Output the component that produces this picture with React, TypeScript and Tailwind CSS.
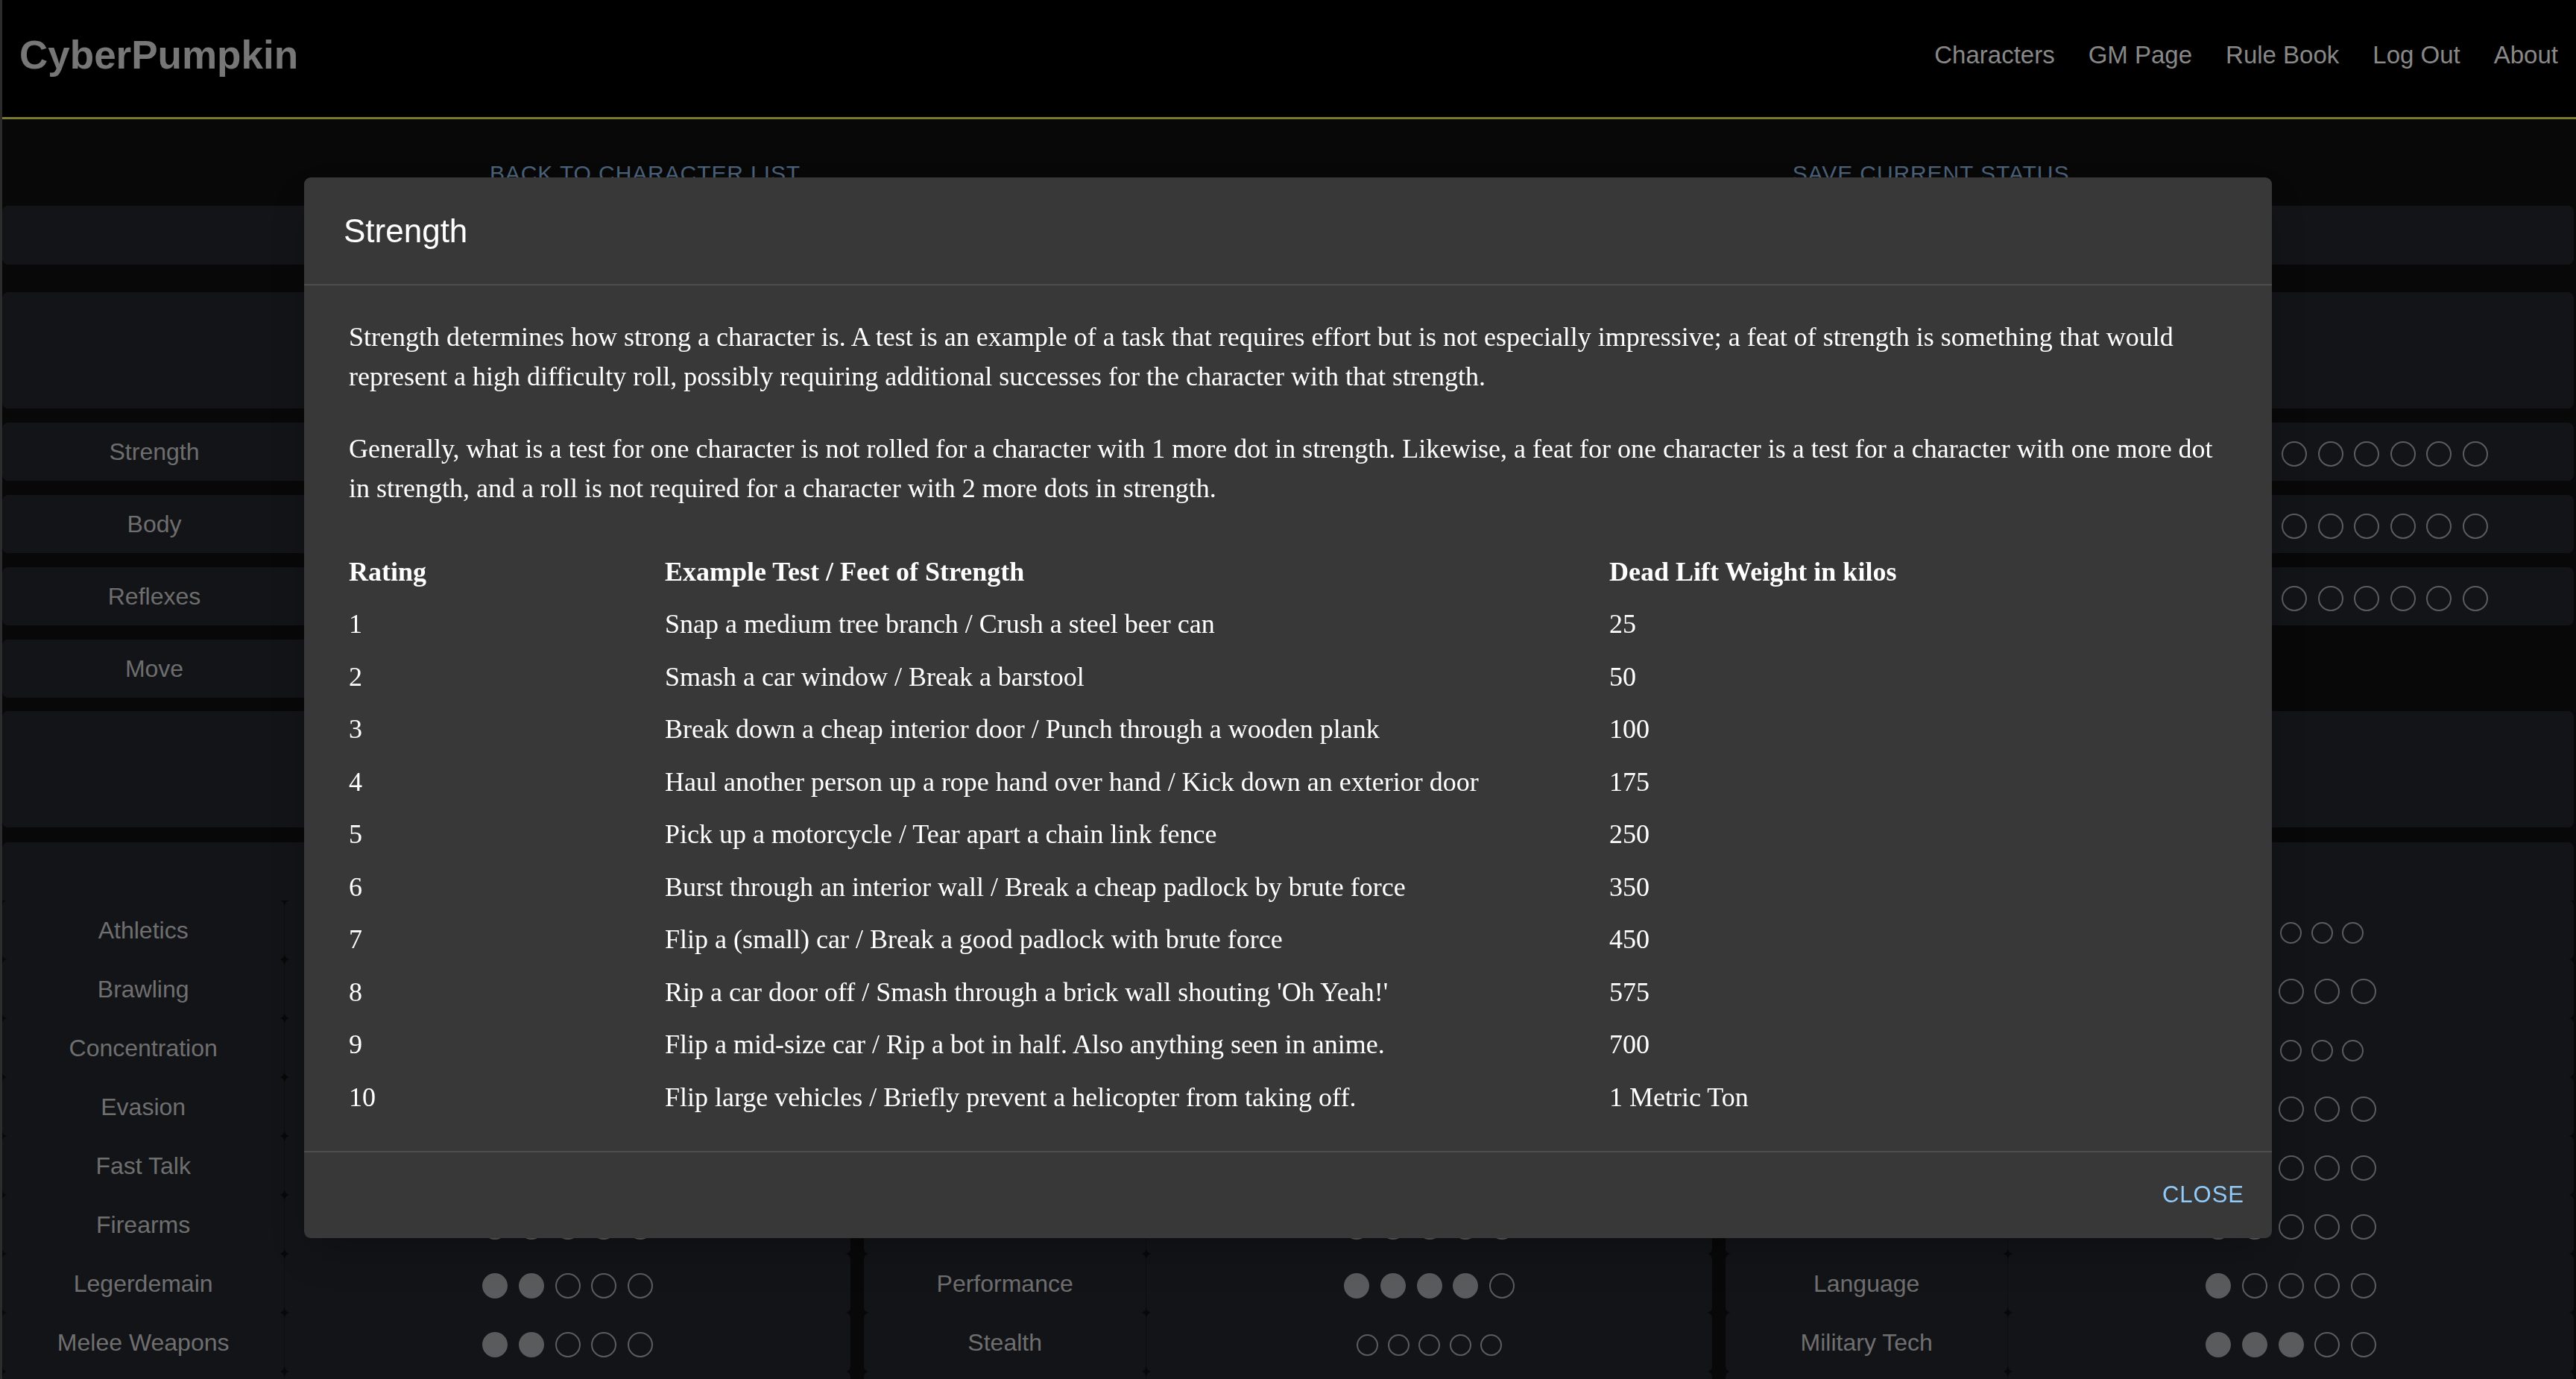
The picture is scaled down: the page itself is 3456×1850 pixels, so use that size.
import React from 'react';

type Skill = { name: string; filled: number; small?: boolean };

const navLinks = ['Characters', 'GM Page', 'Rule Book', 'Log Out', 'About'];

const stats = [
  { name: 'Strength', filled: 3, dots: true },
  { name: 'Body', filled: 2, dots: true },
  { name: 'Reflexes', filled: 4, dots: true },
  { name: 'Move', filled: 0, dots: false },
];

// last entry of each group is the row cut off by the bottom of the window
const skillGroups: Skill[][] = [
  [
    { name: 'Athletics', filled: 1 },
    { name: 'Brawling', filled: 2 },
    { name: 'Concentration', filled: 1 },
    { name: 'Evasion', filled: 2 },
    { name: 'Fast Talk', filled: 1 },
    { name: 'Firearms', filled: 2 },
    { name: 'Legerdemain', filled: 2 },
    { name: 'Melee Weapons', filled: 2 },
    { name: '', filled: 0 },
  ],
  [
    { name: 'Hacking', filled: 1 },
    { name: 'Interrogation', filled: 0 },
    { name: 'Intimidation', filled: 2 },
    { name: 'Investigation', filled: 1 },
    { name: 'Medicine', filled: 0 },
    { name: 'Perception', filled: 2 },
    { name: 'Performance', filled: 4 },
    { name: 'Stealth', filled: 0, small: true },
    { name: '', filled: 0 },
  ],
  [
    { name: 'Computers', filled: 1, small: true },
    { name: 'Drive', filled: 2 },
    { name: 'Electronics', filled: 1, small: true },
    { name: 'Engineering', filled: 2 },
    { name: 'First Aid', filled: 2 },
    { name: 'Gambling', filled: 2 },
    { name: 'Language', filled: 1 },
    { name: 'Military Tech', filled: 3 },
    { name: '', filled: 0 },
  ],
];

const strengthTable = [
  ['1', 'Snap a medium tree branch / Crush a steel beer can', '25'],
  ['2', 'Smash a car window / Break a barstool', '50'],
  ['3', 'Break down a cheap interior door / Punch through a wooden plank', '100'],
  ['4', 'Haul another person up a rope hand over hand / Kick down an exterior door', '175'],
  ['5', 'Pick up a motorcycle / Tear apart a chain link fence', '250'],
  ['6', 'Burst through an interior wall / Break a cheap padlock by brute force', '350'],
  ['7', 'Flip a (small) car / Break a good padlock with brute force', '450'],
  ['8', "Rip a car door off / Smash through a brick wall shouting 'Oh Yeah!'", '575'],
  ['9', 'Flip a mid-size car / Rip a bot in half. Also anything seen in anime.', '700'],
  ['10', 'Flip large vehicles / Briefly prevent a helicopter from taking off.', '1 Metric Ton'],
];

const Dots: React.FC<{ total: number; filled: number; small?: boolean }> = ({
  total,
  filled,
  small,
}) => (
  <div className={small ? 'flex items-center gap-[12.5px]' : 'flex items-center gap-[14.6px]'}>
    {Array.from({ length: total }).map((_, i) =>
      i < filled ? (
        <span
          key={i}
          className={
            small
              ? 'block w-[29px] h-[29px] rounded-full bg-[#5a5b5c]'
              : 'block w-[34px] h-[34px] rounded-full bg-[#5a5b5c]'
          }
        />
      ) : (
        <span
          key={i}
          className={
            small
              ? 'block w-[29px] h-[29px] rounded-full border-2 border-[#5c5c5c]'
              : 'block w-[34px] h-[34px] rounded-full border-2 border-[#5c5c5c]'
          }
        />
      )
    )}
  </div>
);

const SkillGroup: React.FC<{ skills: Skill[] }> = ({ skills }) => (
  <div className="flex flex-col">
    <div className="h-[78px] bg-[#131418] rounded-t-[8px]" />
    {skills.map((s, i) => (
      <div key={i} className="grid grid-cols-[1fr_2fr] h-[79px]">
        <div className="bg-[#131418] rounded-[7px] border-r border-[#0e0f12] flex items-center justify-center text-[32px] text-[#6f6f6f]">
          {s.name}
        </div>
        <div className="bg-[#131418] rounded-[7px] flex items-center justify-center pt-[7px]">
          {s.name && <Dots total={5} filled={s.filled} small={s.small} />}
        </div>
      </div>
    ))}
  </div>
);

const StrengthDialog: React.FC = () => (
  <div className="fixed left-[408px] top-[238px] w-[2640px] bg-[#383838] rounded-[9px] shadow-2xl text-white">
    <div className="h-[143px] flex items-center pl-[53px] text-[44px] font-['Liberation_Sans',Arial,sans-serif]">
      Strength
    </div>
    <div className="border-y-2 border-[#4e4e4e] pt-[43px] pb-[36px] pl-[60px] pr-[58px] font-['Liberation_Serif','Times_New_Roman',serif] text-[36px] leading-[53px]">
      <p>
        Strength determines how strong a character is. A test is an example of a task that requires
        effort but is not especially impressive; a feat of strength is something that would represent a
        high difficulty roll, possibly requiring additional successes for the character with that
        strength.
      </p>
      <p className="mt-[44px]">
        Generally, what is a test for one character is not rolled for a character with 1 more dot in
        strength. Likewise, a feat for one character is a test for a character with one more dot in
        strength, and a roll is not required for a character with 2 more dots in strength.
      </p>
      <div className="mt-[50px]">
        <div className="grid grid-cols-[424px_1267px_1fr] h-[70.5px] items-center font-bold">
          <div>Rating</div>
          <div>Example Test / Feet of Strength</div>
          <div>Dead Lift Weight in kilos</div>
        </div>
        {strengthTable.map(([rating, example, weight]) => (
          <div key={rating} className="grid grid-cols-[424px_1267px_1fr] h-[70.5px] items-center">
            <div>{rating}</div>
            <div>{example}</div>
            <div>{weight}</div>
          </div>
        ))}
      </div>
    </div>
    <div className="h-[115px] flex items-center justify-end pr-[37px]">
      <button className="text-[31px] tracking-[1px] text-[#90caf9] font-['Liberation_Sans',Arial,sans-serif]">
        CLOSE
      </button>
    </div>
  </div>
);

export default function App() {
  return (
    <div className="min-h-screen bg-[#080808] border-l-[3px] border-[#2c2c2c] font-['Liberation_Sans',Arial,sans-serif] overflow-hidden">
      <header className="h-[160px] bg-black border-b-[3px] border-[#7c7a2e] flex items-center justify-between pl-[23px] pr-[24px] pb-[9px]">
        <div className="text-[53px] font-bold text-[#777777]">CyberPumpkin</div>
        <nav className="flex items-center gap-[45px] text-[33px] text-[#888888]">
          {navLinks.map((l) => (
            <a key={l}>{l}</a>
          ))}
        </nav>
      </header>

      <main className="pr-[3px]">
        <div className="grid grid-cols-2 h-[116px] pt-[56px]">
          <div className="flex justify-center text-[30px] leading-[34px] tracking-[0.9px] text-[#4a6179]">
            BACK TO CHARACTER LIST
          </div>
          <div className="flex justify-center text-[30px] leading-[34px] tracking-[0.9px] text-[#4a6179]">
            SAVE CURRENT STATUS
          </div>
        </div>

        <div className="h-[79px] bg-[#131418] rounded-[8px]" />
        <div className="mt-[37px] h-[156px] bg-[#131418] rounded-[8px]" />

        <div className="mt-[19px] flex flex-col gap-[19px]">
          {stats.map((s) =>
            s.dots ? (
              <div key={s.name} className="h-[78px] bg-[#131418] rounded-[8px] flex items-center">
                <div className="w-[408px] text-center text-[32px] text-[#6e6e6e]">{s.name}</div>
                <div className="flex-1 flex justify-end pr-[115px] pt-[5px]">
                  <Dots total={10} filled={s.filled} />
                </div>
              </div>
            ) : (
              <div key={s.name} className="h-[78px] w-[2600px] bg-[#131418] rounded-[8px] flex items-center">
                <div className="w-[408px] text-center text-[32px] text-[#6e6e6e]">{s.name}</div>
              </div>
            )
          )}
        </div>

        <div className="mt-[18px] h-[156px] bg-[#131418] rounded-[8px]" />

        <div className="mt-[20px] grid grid-cols-3 gap-x-[18px]">
          {skillGroups.map((g, i) => (
            <SkillGroup key={i} skills={g} />
          ))}
        </div>
      </main>

      <StrengthDialog />
    </div>
  );
}
